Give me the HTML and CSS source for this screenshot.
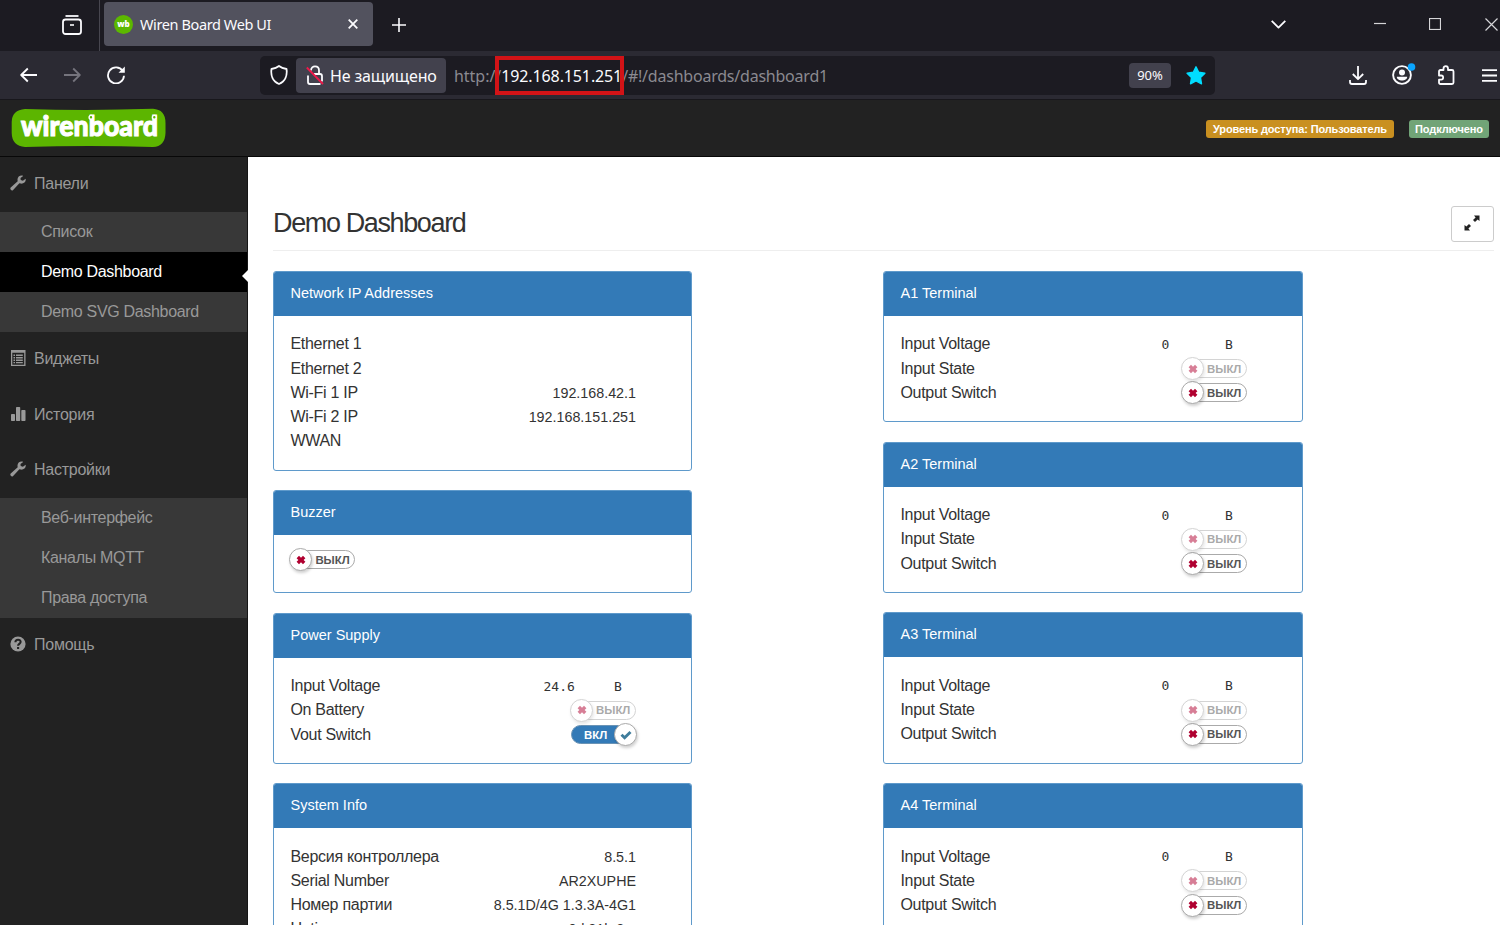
FILE: index.html
```html
<!DOCTYPE html>
<html lang="ru">
<head>
<meta charset="utf-8">
<title>Wiren Board Web UI</title>
<link rel="stylesheet" href="styles.css">
</head>
<body>
<svg class="defs" width="0" height="0">
  <symbol id="wrench" viewBox="0 0 16 16"><path d="M15.700 3.700 12.900 5.700 10.700 4.900 10.500 2.900 13.200 .9C10.500-.2 7.300 1.700 7.500 4.900L7.700 6.200 .7 12.600C-.5 13.900 1.300 16.200 2.900 15.200L9.400 8.300 10.700 8.600C13.800 9 16.200 6.600 15.700 3.700Z"/></symbol>
  <symbol id="x" viewBox="0 0 10 10"><path d="M3 .8 5 2.800 7 .8 9.400 3.200 7.600 5 9.400 6.800 7 9.200 5 7.200 3 9.200 .6 6.800 2.400 5 .6 3.200Z"/></symbol>
</svg>
<div class="window">
  <div class="tabs">
    <div class="view-slot"><svg width="20" height="20" viewBox="0 0 20 20" class="line"><path d="M3.500 1h13"/><rect x="1" y="4.500" width="18" height="14.500" rx="2.500"/><path d="M8 10h4" stroke-width="1.600"/></svg></div>
    <div class="tab">
      <svg class="favicon" width="19" height="19" viewBox="0 0 19 19"><circle cx="9.500" cy="9.500" r="9.500" fill="#5cb800"/><text x="9.500" y="12.300" text-anchor="middle" textLength="12.500" lengthAdjust="spacingAndGlyphs" class="favtext">wb</text></svg>
      <span class="tab-title">Wiren Board Web UI</span>
      <svg width="10" height="10" viewBox="0 0 10 10" class="line"><path d="M.7.7l8.600 8.600M9.300.7.7 9.300"/></svg>
    </div>
    <svg class="plus line" width="14" height="14" viewBox="0 0 14 14"><path d="M7 0v14M0 7h14"/></svg>
    <div class="window-buttons">
      <svg width="15" height="9" viewBox="0 0 15 9" class="line"><path d="M.7.8 7.500 7.600 14.300.8"/></svg>
      <svg width="12" height="12" viewBox="0 0 12 12" class="thin"><path d="M0 5.500h12"/></svg>
      <svg width="12" height="12" viewBox="0 0 12 12" class="thin"><rect x=".5" y=".5" width="11" height="11"/></svg>
      <svg width="13" height="13" viewBox="0 0 13 13" class="thin"><path d="M.5.5l12 12M12.500.5.5 12.500"/></svg>
    </div>
  </div>
  <div class="toolbar">
    <div class="nav">
      <svg width="17" height="16" viewBox="0 0 17 16" class="line"><path d="M17 8H1.500M7.800 1.500 1.200 8 7.800 14.500"/></svg>
      <svg width="17" height="16" viewBox="0 0 17 16" class="line dim"><path d="M0 8h15.500M9.200 1.500 15.800 8 9.200 14.500"/></svg>
      <svg width="18" height="18" viewBox="0 0 18 18" class="line"><path d="M15.700 5A8 8 0 1 0 17 9.800"/><path d="M17.800.5v6.300h-6.300Z" fill="#fbfbfe" stroke="none"/></svg>
    </div>
    <div class="urlbar">
      <svg class="shield line" width="18" height="20" viewBox="0 0 18 20"><path d="M9 1C6.500 3 4 3.600 1.500 4 .6 10 2.500 16.500 9 19 15.500 16.500 17.400 10 16.500 4 14 3.600 11.500 3 9 1Z"/></svg>
      <div class="insecure">
        <svg width="18" height="20" viewBox="0 0 18 20" class="line"><path d="M2 10.500V17q0 2 2 2h10.500M8 9h6q2 0 2 2v5.500M5 5.500C5 0 13 0 13 5.500V9"/><path d="M.8 2.500 17 19" stroke="#f0194b"/></svg>
        <span>Не защищено</span>
      </div>
      <div class="url">http://<b>192.168.151.251</b><span class="tail">/#!/dashboards/dashboard1</span><i class="mark"></i></div>
      <span class="zoom">90%</span>
      <svg width="20" height="19" viewBox="0 0 20 19"><path d="M10 .8 12.700 6.300 18.900 7.200 14.500 11.600 15.500 17.800 10 15 4.500 17.800 5.500 11.600 1.100 7.200 7.300 6.300Z" fill="#00ddff" stroke="#00ddff" stroke-width="1.400" stroke-linejoin="round"/></svg>
    </div>
    <div class="tools">
      <svg width="18" height="19" viewBox="0 0 18 19" class="line"><path d="M9 0v13M3.800 8 9 13.200 14.200 8M1 14v2q0 2 2 2h12q2 0 2-2v-2"/></svg>
      <svg width="24" height="22" viewBox="0 0 24 22"><circle cx="10" cy="12" r="8.900" fill="none" stroke="#fbfbfe" stroke-width="1.900"/><circle cx="10" cy="9.600" r="3" fill="#fbfbfe"/><path d="M4.800 13.800h10.400c0 5-10.400 5-10.400 0Z" fill="#fbfbfe"/><circle cx="19.500" cy="4" r="3.800" fill="#0aa5ff"/></svg>
      <svg width="18" height="20" viewBox="0 0 18 20" class="line"><path d="M2 9V6.500q0-1.500 1.500-1.500H6.500V3.500C6.500.2 11 .2 11 3.500V5h4q1.500 0 1.500 1.500v11q0 1.500-1.500 1.500H3.500Q2 19 2 17.500V14.700h2.200c2.600 0 2.600-4.200 0-4.200H2Z"/></svg>
      <svg width="16" height="13" viewBox="0 0 16 13" class="line"><path d="M0 1.200h15M0 6.500h15M0 11.800h15"/></svg>
    </div>
  </div>
  <header class="header">
    <svg class="logo" width="156" height="40" viewBox="0 0 156 40"><path d="M14 1Q78 3 142 .8Q154.500 1.500 154.500 15V25Q154 38.500 142 39Q78 37 14 39Q1 38 .7 25V14Q1 2 14 1Z" fill="#5cb500"/><text x="10" y="27.500" textLength="137" lengthAdjust="spacingAndGlyphs" class="logo-text">wirenboard</text><g fill="#5cb500" stroke="#fff" stroke-width="1.400"><circle cx="80" cy="9.300" r="1.900"/><circle cx="143.300" cy="9.300" r="1.900"/></g></svg>
    <span class="label amber">Уровень доступа: Пользователь</span>
    <span class="label green">Подключено</span>
  </header>
  <div class="page">
    <nav class="sidebar">
      <a class="item"><svg width="16" height="16"><use href="#wrench"/></svg>Панели</a>
      <div class="sub"><a>Список</a><a class="active">Demo Dashboard</a><a>Demo SVG Dashboard</a></div>
      <a class="item"><svg width="16" height="16" viewBox="0 0 16 16"><path fill-rule="evenodd" d="M1 0h14.500v16H1ZM2.300 2.700v12h11.900v-12Z"/><path d="M3.500 4.500H5V6H3.500ZM6 4.500h6.800V6H6ZM3.500 7H5v1.500H3.500ZM6 7h6.800v1.500H6ZM3.500 9.500H5V11H3.500ZM6 9.500h6.800V11H6ZM3.500 12H5v1.300H3.500ZM6 12h6.800v1.300H6Z"/></svg>Виджеты</a>
      <a class="item"><svg width="16" height="16" viewBox="0 0 16 16"><rect x="1" y="8" width="4" height="7" rx=".7"/><rect x="6" y="1" width="4.200" height="14" rx=".7"/><rect x="11.300" y="4" width="4.200" height="11" rx=".7"/></svg>История</a>
      <a class="item"><svg width="16" height="16"><use href="#wrench"/></svg>Настройки</a>
      <div class="sub"><a>Веб-интерфейс</a><a>Каналы MQTT</a><a>Права доступа</a></div>
      <a class="item"><svg width="16" height="16" viewBox="0 0 16 16"><circle cx="8" cy="8" r="7.600"/><path d="M5.400 6.200C5.500 2.800 10.800 3 10.600 6 10.500 7.800 8.100 8 8.100 9.800M8.100 11v2" fill="none" stroke="#222" stroke-width="2.100"/></svg>Помощь</a>
    </nav>
    <main class="content">
      <div class="title-row"><h1>Demo Dashboard</h1><button class="expand"><svg width="16" height="16" viewBox="0 0 16 16"><path d="M10 .5h5.500V6L13.600 4.400 11 7 9 5 11.600 2.400ZM.5 10 2.400 11.600 5 9 7 11 4.400 13.600 6 15.500H.5Z"/></svg></button></div>
      <div class="columns">
        <div class="column">
          <section class="panel"><h2>Network IP Addresses</h2><div class="body">
            <div class="row">Ethernet 1</div><div class="row">Ethernet 2</div>
            <div class="row">Wi-Fi 1 IP<span class="value">192.168.42.1</span></div>
            <div class="row">Wi-Fi 2 IP<span class="value">192.168.151.251</span></div>
            <div class="row">WWAN</div></div></section>
          <section class="panel buzzer"><h2>Buzzer</h2><div class="body"><span class="switch"><span class="knob"><svg width="10" height="10"><use href="#x"/></svg></span>ВЫКЛ</span></div></section>
          <section class="panel power"><h2>Power Supply</h2><div class="body">
            <div class="row">Input Voltage<span class="num">24.6</span><span class="unit">В</span></div>
            <div class="row">On Battery<span class="switch faded"><span class="knob"><svg width="10" height="10"><use href="#x"/></svg></span>ВЫКЛ</span></div>
            <div class="row">Vout Switch<span class="switch on">ВКЛ<span class="knob"><svg width="12" height="10" viewBox="0 0 12 10"><path d="M1.500 4.800 4.600 7.800 10.500 2" fill="none" stroke="#3f7d9c" stroke-width="2.900"/></svg></span></span></div></div></section>
          <section class="panel"><h2>System Info</h2><div class="body">
            <div class="row">Версия контроллера<span class="value">8.5.1</span></div>
            <div class="row">Serial Number<span class="value">AR2XUPHE</span></div>
            <div class="row">Номер партии<span class="value">8.5.1D/4G 1.3.3A-4G1</span></div>
            <div class="row">Uptime<span class="value">0d 21h 2m</span></div></div></section>
        </div>
        <div class="column right" id="terminals"></div>
      </div>
    </main>
  </div>
</div>
<script src="terminals.js"></script>
</body>
</html>
```

FILE: terminals.js
```js
const off = (extra) => `<span class="switch ${extra}"><span class="knob"><svg width="10" height="10"><use href="#x"/></svg></span>ВЫКЛ</span>`;
document.getElementById('terminals').innerHTML = ['A1', 'A2', 'A3', 'A4'].map((name) => `
  <section class="panel"><h2>${name} Terminal</h2><div class="body">
    <div class="row">Input Voltage<span class="num">0</span><span class="unit">В</span></div>
    <div class="row">Input State${off('faded')}</div>
    <div class="row">Output Switch${off('')}</div>
  </div></section>`).join('');
```

FILE: styles.css
```css
* { box-sizing: border-box; }
body { margin: 0; font: 16px "Liberation Sans", Arial, sans-serif; color: #333; background: #fff; }
.defs { position: absolute; }
svg { flex: none; display: block; }
.window { width: 1500px; height: 925px; overflow: hidden; display: flex; flex-direction: column; }
.line { fill: none; stroke: #fbfbfe; stroke-width: 1.8; stroke-linejoin: round; }
.thin { fill: none; stroke: #d5d5d8; stroke-width: 1.2; }
.dim { stroke: #75747d; }

.tabs { flex: none; height: 51px; background: #1c1b22; display: flex; align-items: center; font-family: "Noto Sans", "Open Sans", sans-serif; color: #fbfbfe; }
.view-slot { width: 100px; height: 51px; padding: 15px 0 0 62px; border-right: 1px solid #47464f; }
.tab { width: 269px; height: 44px; margin: -3px 0 0 4px; padding: 0 15px 0 10px; display: flex; align-items: center; background: #52525e; border-radius: 4px; }
.favtext { font: 800 9px "Open Sans", sans-serif; fill: #fff; }
.tab-title { flex: 1; margin-left: 7px; font-size: 14.5px; letter-spacing: -.39px; }
.plus { margin: -1px 0 0 19px; stroke-width: 1.6; }
.window-buttons { margin-left: auto; display: flex; align-items: center; padding-bottom: 3px; }
.window-buttons svg:nth-child(2) { margin-left: 88px; }
.window-buttons svg:nth-child(3) { margin-left: 43px; }
.window-buttons svg:nth-child(4) { margin: 0 2px 0 44px; }

.toolbar { flex: none; height: 49px; background: #2b2a33; border-bottom: 1px solid #18171c; display: flex; align-items: center; font-family: "Noto Sans", "Open Sans", sans-serif; color: #fbfbfe; }
.nav { width: 260px; padding-left: 20px; display: flex; align-items: center; gap: 27px; }
.nav svg:last-child { margin-left: -1px; }
.urlbar { width: 955px; height: 39px; background: #1c1b22; border-radius: 5px; display: flex; align-items: center; }
.shield { margin: 0 8px 0 10px; }
.insecure { width: 150px; height: 35px; padding-left: 10px; display: flex; align-items: center; background: #42414d; border-radius: 4px; white-space: nowrap; }
.insecure span { margin: 2px 0 0 6px; font-size: 16px; letter-spacing: -.15px; }
.url { position: relative; flex: 1; margin: 2px 0 0 8px; font-size: 16px; letter-spacing: -.03px; color: #8b8a91; white-space: nowrap; }
.url b { font-weight: 400; letter-spacing: -.12px; color: #fbfbfe; }
.tail { letter-spacing: -.22px; }
.mark { position: absolute; left: 41px; top: -9px; width: 129px; height: 39px; border: 4px solid #d21317; }
.zoom { width: 42px; height: 25px; margin-right: 15px; border-radius: 4px; background: #42414d; font-size: 13px; line-height: 25px; text-align: center; }
.urlbar > svg:last-child { margin-right: 9px; }
.tools { flex: 1; display: flex; align-items: center; padding-left: 134px; }
.tools svg:nth-child(2) { margin: -3px 0 0 25px; }
.tools svg:nth-child(3) { margin-left: 21px; }
.tools svg:nth-child(4) { margin-left: 27px; }

.header { flex: none; height: 57px; background: #222; border-bottom: 1px solid #080808; display: flex; align-items: center; padding: 0 11px; }
.logo { margin-right: auto; overflow: visible; }
.logo-text { font: 900 29px Lato, sans-serif; fill: #fff; stroke: #fff; stroke-width: 1.1; }
.label { height: 18px; margin-top: 2px; border-radius: 3px; color: #fff; font-size: 11px; font-weight: 700; line-height: 18px; text-align: center; white-space: nowrap; }
.amber { width: 188px; background: #c99020; letter-spacing: -.14px; }
.green { width: 80px; margin-left: 15px; background: #71a477; letter-spacing: -.1px; }

.page { flex: 1; min-height: 0; display: flex; }
.sidebar { width: 248px; background: #222; border-right: 1px solid #151515; color: #999; }
.item { height: 55.3px; padding: 0 0 1px 10px; display: flex; align-items: center; gap: 8px; fill: #999; letter-spacing: -.25px; }
.item svg { margin-top: -2px; }
.sub { background: #383838; letter-spacing: -.32px; }
.sub a { position: relative; height: 40px; padding-left: 41px; display: flex; align-items: center; }
.sub .active { background: #000; color: #fff; }
.active::after { content: ""; position: absolute; right: -1px; top: 18px; border: 6px solid transparent; border-right-color: #fff; border-left: 0; }

.content { flex: 1; padding: 49px 6px 0 25px; overflow: hidden; }
.title-row { height: 45px; border-bottom: 1px solid #eee; display: flex; justify-content: space-between; }
h1 { margin: 0; font-size: 27px; font-weight: 400; line-height: 34px; letter-spacing: -1.37px; }
.expand { width: 43px; height: 36px; padding: 0 1px 2px 0; border: 1px solid #ccc; border-radius: 3px; background: #fff; display: flex; align-items: center; justify-content: center; fill: #222; }
.columns { display: flex; gap: 191px; margin-top: 20px; }
.column { width: 419px; display: flex; flex-direction: column; gap: 19.6px; }
.right { width: 420px; }
.panel { border: 1px solid #5f9acb; border-radius: 3px; overflow: hidden; background: #fff; }
h2 { margin: -1px -1px 0; height: 45px; padding-left: 17.5px; background: #337ab7; color: #fff; font-size: 14.5px; font-weight: 400; line-height: 44px; }
.body { padding: 16.4px 55px 16.2px 16.4px; }
.row { height: 24.2px; display: flex; align-items: center; letter-spacing: -.28px; }
.row > span { margin-left: auto; letter-spacing: 0; }
.row .value { font-size: 14.3px; }
.row .num { font: 13px "DejaVu Sans Mono", monospace; width: 63.5px; }
.power .row .num { width: 70.5px; }
.row .unit { font: 13px "DejaVu Sans Mono", monospace; margin-left: 0; width: 22px; }
.switch { width: 65px; height: 19px; border: 1px solid #aaa; border-radius: 10px; display: flex; align-items: center; font-size: 11.4px; font-weight: 700; color: #555; background: #fff; }
.knob { flex: none; width: 23px; height: 23px; margin: 0 3px 0 -2px; border: 1px solid #aaa; border-radius: 50%; background: #fff; display: flex; align-items: center; justify-content: center; fill: #b00030; box-shadow: 1px 2px 3px rgba(0,0,0,.18); }
.faded { opacity: .5; }
.on { background: #337ab7; border-color: #6a93b5; color: #fff; padding-left: 12px; }
.on .knob { margin: 0 -2px 0 auto; }
.buzzer .body { height: 57px; padding-top: 15px; }
```
